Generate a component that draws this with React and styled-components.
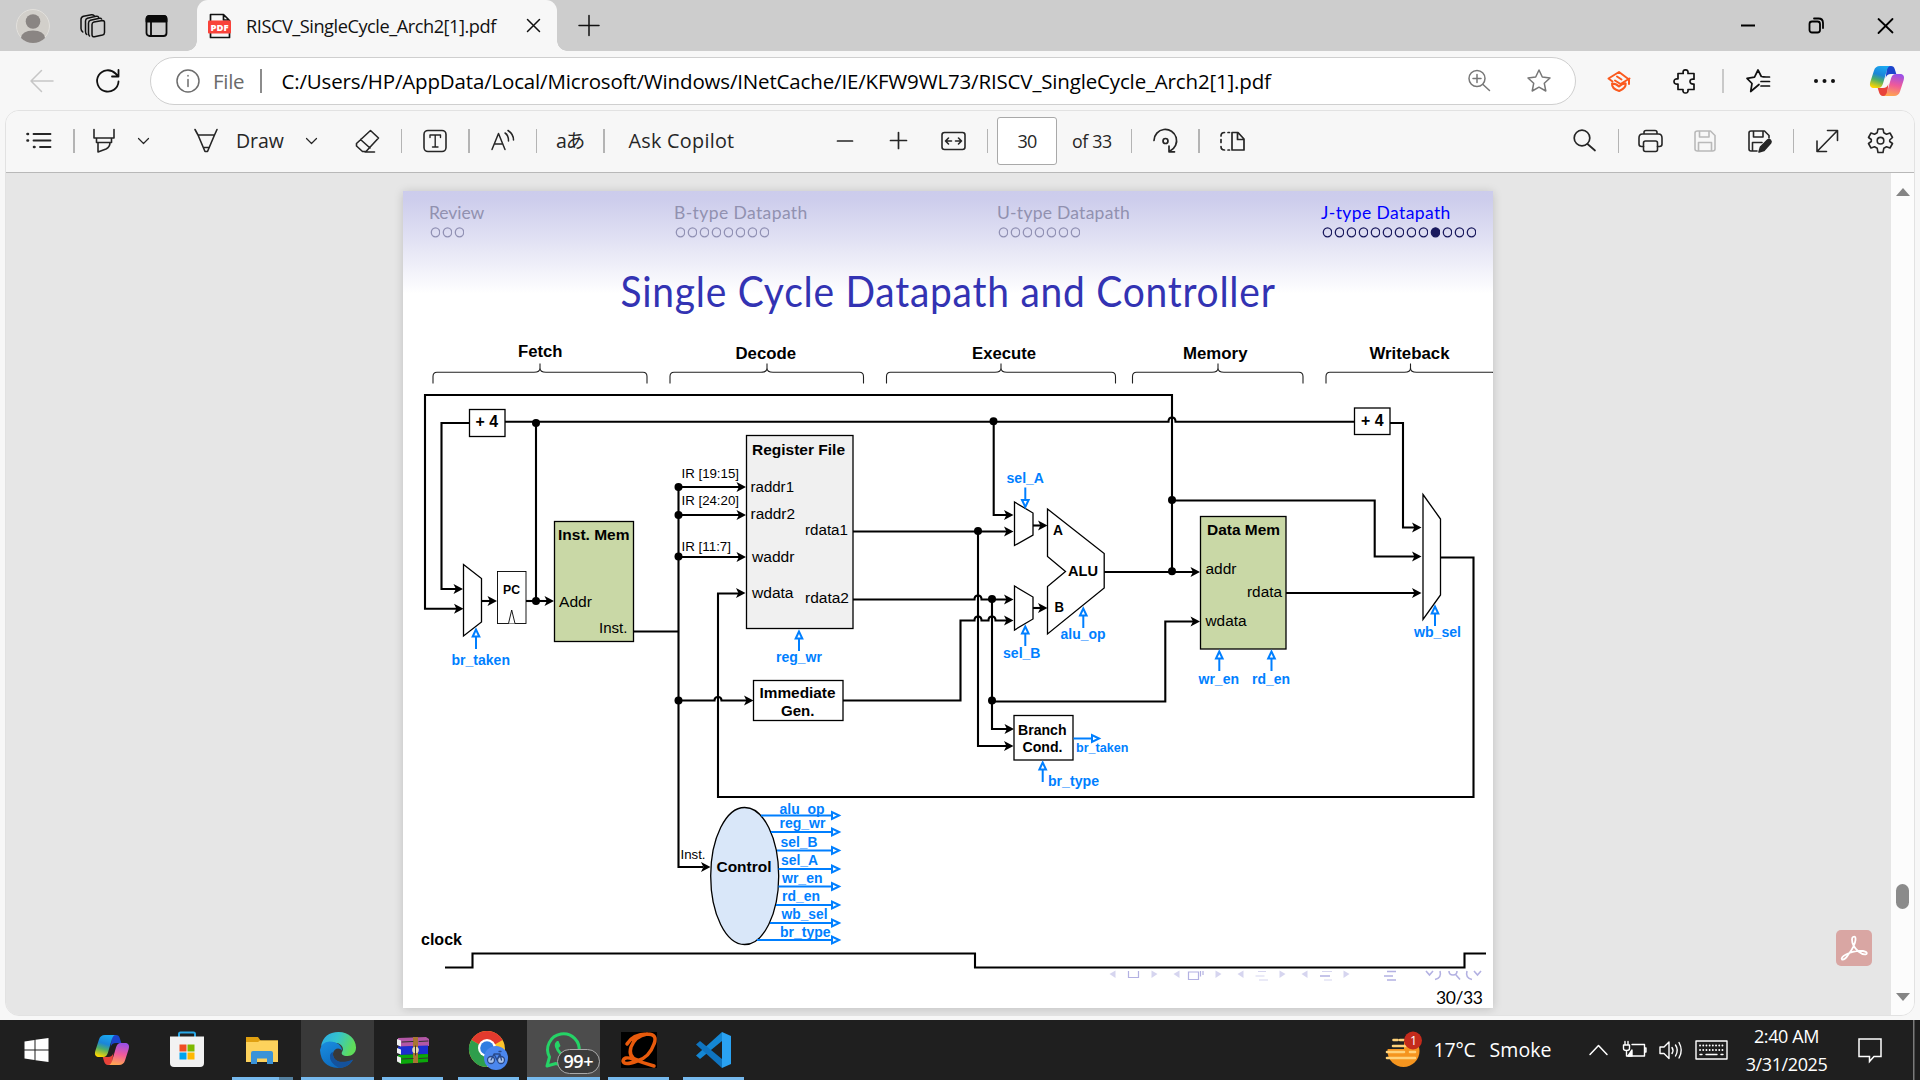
import React from "react";
import styled, { createGlobalStyle, css } from "styled-components";

const UI = '"Open Sans", "Noto Sans", "Noto Sans CJK JP", sans-serif';
const BLUE = "#007fff";

const Global = createGlobalStyle`
  * { box-sizing: border-box; }
  html, body { margin: 0; padding: 0; width: 1920px; height: 1080px; overflow: hidden; background: #f7f7f7; }
`;

const Screen = styled.div`
  width: 1920px;
  height: 1080px;
  display: flex;
  flex-direction: column;
  background: #f7f7f7;
  font-family: ${UI};
  font-stretch: 92%;
  color: #111;
  overflow: hidden;
`;

const Svg = styled.svg`
  display: block;
  flex: none;
  overflow: visible;
  width: ${(p) => p.$w}px;
  height: ${(p) => p.$h}px;
  margin-left: ${(p) => p.$gap || 0}px;
  color: ${(p) => p.$color || "inherit"};
  fill: none;
  stroke: currentColor;
  stroke-width: ${(p) => p.$sw || 1.6};
  stroke-linecap: round;
  stroke-linejoin: round;
`;

function Icon({ w = 24, h = 24, gap, color, sw, children }) {
  return (
    <Svg $w={w} $h={h} $gap={gap} $color={color} $sw={sw} viewBox={`0 0 ${w} ${h}`}>
      {children}
    </Svg>
  );
}

const Spacer = styled.div`
  flex: 1;
`;

const Label = styled.span`
  flex: none;
  width: ${(p) => p.$w}px;
  margin-left: ${(p) => p.$gap || 0}px;
  font-size: ${(p) => p.$size || 20}px;
  letter-spacing: ${(p) => p.$ls || 0}px;
  color: ${(p) => p.$color || "inherit"};
  line-height: 28px;
  white-space: nowrap;
`;

/* ---------- tab strip ---------- */

const TabStrip = styled.div`
  display: flex;
  align-items: center;
  height: 51px;
  flex: none;
  padding: 0 26px 0 16px;
  background: #cdcdcd;
`;

const Tab = styled.div`
  position: relative;
  display: flex;
  align-items: center;
  width: 360px;
  height: 51px;
  margin-left: 28px;
  padding-left: 11px;
  background: #f7f7f7;
  border-radius: 11px 11px 0 0;
  &::before,
  &::after {
    content: "";
    position: absolute;
    bottom: 0;
    width: 10px;
    height: 10px;
  }
  &::before {
    left: -10px;
    background: radial-gradient(circle at 0 0, #cdcdcd 9.5px, #f7f7f7 10px);
  }
  &::after {
    right: -10px;
    background: radial-gradient(circle at 100% 0, #cdcdcd 9.5px, #f7f7f7 10px);
  }
`;

/* ---------- address row ---------- */

const AddressRow = styled.div`
  display: flex;
  align-items: center;
  height: 59px;
  flex: none;
  padding: 1px 0 0 30px;
`;

const Pill = styled.div`
  display: flex;
  align-items: center;
  width: 1426px;
  height: 48px;
  margin-left: 30px;
  padding: 0 23px 0 25px;
  border: 1.5px solid #cfcfcf;
  border-radius: 24px;
  background: #fff;
`;

const Rule = styled.div`
  flex: none;
  width: ${(p) => p.$w || 1.5}px;
  height: 24px;
  margin-left: ${(p) => p.$gap}px;
  background: ${(p) => p.$color || "#b4b4b4"};
`;

/* ---------- viewer ---------- */

const Viewer = styled.div`
  display: flex;
  flex-direction: column;
  width: 1910px;
  height: 906px;
  flex: none;
  margin-left: 5px;
  border: 1px solid #e2e2e2;
  border-radius: 14px;
  overflow: hidden;
`;

const Toolbar = styled.div`
  display: flex;
  align-items: center;
  height: 62px;
  flex: none;
  padding: 0 21px 1px 0;
  border-bottom: 1px solid #b8b8b8;
  background: #f7f7f7;
  color: #262626;
`;

const PageBox = styled.div`
  width: 60px;
  height: 48px;
  margin-left: 9px;
  flex: none;
  border: 1px solid #a9a9a9;
  border-radius: 3px;
  background: #fff;
  display: flex;
  align-items: center;
  justify-content: center;
  font-size: 18px;
  letter-spacing: -0.7px;
`;

const Canvas = styled.div`
  display: flex;
  flex: 1;
  background: #e6e6e6;
  padding: 18px 0 0 397px;
`;

const Sheet = styled.div`
  width: 1090px;
  height: 817px;
  flex: none;
  display: flex;
  flex-direction: column;
  background: linear-gradient(#ccccec 0, #cdcdec 8px, #e3e3f4 52px, #fff 103px) #fefefe;
  box-shadow: 0 1px 9px rgba(0, 0, 0, 0.17);
  font-family: Lato, "Open Sans", sans-serif;
  font-stretch: 100%;
  overflow: hidden;
`;

const SheetNav = styled.div`
  display: flex;
  height: 64px;
  padding: 9.5px 0 0 26px;
`;

const Section = styled.div`
  width: ${(p) => p.$w}px;
  flex: none;
  font-size: 17.5px;
  line-height: 24px;
  letter-spacing: ${(p) => p.$ls ?? 0.4}px;
  color: ${(p) => (p.$on ? "#0000ff" : "#9191b0")};
  white-space: nowrap;
`;

const Dots = styled.div`
  display: flex;
  gap: 2px;
  padding: 2.5px 0 0 1px;
`;

const Dot = styled.svg`
  display: block;
  flex: none;
  width: 10px;
  height: 11px;
  fill: ${(p) => (p.$fill ? "#1a1a5e" : "none")};
  stroke: ${(p) => (p.$on ? "#1a1a5e" : "#9191b4")};
  stroke-width: 1.3;
`;

const Heading = styled.h1`
  height: 80px;
  margin: 0;
  text-align: center;
  font-weight: 400;
  font-size: 42px;
  line-height: 72px;
  letter-spacing: 0.8px;
  white-space: nowrap;
  transform: scaleX(0.928);
  color: #3333b3;
`;

const Diagram = styled.svg`
  display: block;
  width: 1090px;
  height: 673px;
  flex: none;
  font-family: "Liberation Sans", Arial, sans-serif;
  font-size: 15.2px;
  .w { fill: none; stroke: #000; stroke-width: 2.1; }
  .b { stroke: #000; stroke-width: 1.3; }
  .c { fill: none; stroke: ${BLUE}; stroke-width: 2; }
  .brace { fill: none; stroke: #222; stroke-width: 1.1; }
  text { fill: #000; white-space: pre; }
  .sig { fill: ${BLUE}; font-weight: 700; }
  .bold { font-weight: 700; }
`;

const Rail = styled.div`
  display: flex;
  flex-direction: column;
  align-items: center;
  width: 23px;
  height: 842px;
  margin: -18px 0 0 auto;
  padding: 15px 0 14px;
  background: #fcfcfc;
`;

const Thumb = styled.div`
  width: 13px;
  height: 25px;
  margin: 688px 0 auto;
  border-radius: 7px;
  background: #8b8b8b;
`;

const Caret = styled.div`
  border-left: 7.5px solid transparent;
  border-right: 7.5px solid transparent;
  ${(p) =>
    p.$up
      ? css`border-bottom: 8px solid #858585;`
      : css`border-top: 8px solid #858585;`}
`;

const Acrobat = styled.div`
  align-self: flex-end;
  width: 36px;
  height: 36px;
  margin: 0 0 49px 343px;
  border-radius: 5px;
  background: #d9a6a3;
`;

/* ---------- taskbar ---------- */

const Taskbar = styled.div`
  display: flex;
  align-items: center;
  height: 60px;
  flex: none;
  margin-top: 4px;
  padding-right: 6px;
  background: #1f1f1f;
  color: #fff;
`;

const Apps = styled.div`
  display: flex;
  gap: 2.25px;
`;

const Tile = styled.div`
  position: relative;
  display: flex;
  align-items: center;
  justify-content: center;
  width: 73px;
  height: 60px;
  background: ${(p) => p.$bg || "transparent"};
  &::after {
    content: "";
    position: absolute;
    bottom: 0;
    left: ${(p) => (p.$bar === "full" ? 0 : 6)}px;
    right: ${(p) => (p.$bar === "full" ? 0 : 6)}px;
    height: ${(p) => (p.$bar ? 3 : 0)}px;
    background: ${(p) =>
      p.$bar === "stack" ? "linear-gradient(90deg, #76b9ed 47px, #54809f 47px)" : "#76b9ed"};
  }
`;

const Badge = styled.div`
  position: absolute;
  right: 0;
  top: 29px;
  width: 43px;
  height: 25px;
  border: 1px solid #a9a9a9;
  border-radius: 13px;
  background: #3b3b3b;
  font-size: 18px;
  font-weight: 600;
  line-height: 23px;
  letter-spacing: -0.5px;
  text-align: center;
`;

const Clock = styled.div`
  width: 92px;
  margin-left: 13px;
  margin-right: 1px;
  font-size: 18px;
  line-height: 28px;
  letter-spacing: -0.4px;
  text-align: center;
  white-space: nowrap;
`;

/* ---------- icons ---------- */

function Copilot({ w = 34, h = 30, gap, id }) {
  return (
    <Svg $w={w} $h={h} $gap={gap} viewBox="0 0 34 30" preserveAspectRatio="none">
      <defs>
        <linearGradient id={`${id}a`} x1="0.6" y1="0" x2="0.3" y2="1">
          <stop offset="0" stopColor="#1ba8f0" />
          <stop offset=".4" stopColor="#1b85d8" />
          <stop offset=".65" stopColor="#4fae66" />
          <stop offset="1" stopColor="#ffd600" />
        </linearGradient>
        <linearGradient id={`${id}b`} x1="0.6" y1="0" x2="0.4" y2="1">
          <stop offset="0" stopColor="#9a50e8" />
          <stop offset=".5" stopColor="#f05a9a" />
          <stop offset="1" stopColor="#ffa650" />
        </linearGradient>
      </defs>
      <g stroke="none">
        <path d="M17 0h4c2 0 3.2 1.200 3.800 3.200L26.300 8H21c-3 0-4.500 1.500-5.300 4z" fill="#1c44cc" />
        <path d="M17 30h-4c-2 0-3.200-1.200-3.800-3.200L7.700 22H13c3 0 4.500-1.500 5.300-4z" fill="#e8433a" />
        <path d="M10 0h11c-2.400 0-3.400 1.800-4.200 4.500L13 17.500c-.8 2.700-2 4.500-5 4.500H4c-3.600 0-4.700-2.500-3.700-6L4 4.500C4.900 1.600 6.800 0 10 0z" fill={`url(#${id}a)`} />
        <path d="M24 30H13c2.400 0 3.400-1.800 4.200-4.500L21 12.500c.8-2.700 2-4.500 5-4.500h4c3.600 0 4.700 2.500 3.700 6L30 25.500c-.9 2.900-2.800 4.500-6 4.500z" fill={`url(#${id}b)`} />
      </g>
    </Svg>
  );
}

const Chevron = ({ gap }) => (
  <Icon w={12} h={8} gap={gap} sw={1.2}><path d="M.5 1.500l5 5 5-5" /></Icon>
);

/* ---------- diagram parts ---------- */

function Head({ x, y }) {
  return <path d={`M${x} ${y}l-9.500-5 2.400 5-2.400 5z`} fill="#000" />;
}
function Wire({ d, to }) {
  return (
    <>
      <path className="w" d={d} />
      {to && <Head x={to[0]} y={to[1]} />}
    </>
  );
}
function Ctl({ x, y, dir = "up", len = 21 }) {
  const rot = { up: 0, right: 90, down: 180 }[dir];
  return (
    <g transform={`translate(${x} ${y}) rotate(${rot})`}>
      <path className="c" d={`M0 8V${len}`} />
      <path className="c" d="M0 1.500L-3.300 8.500H3.300z" fill="#fff" />
    </g>
  );
}
const T = ({ x, y, w, size, a, c = "", children }) => (
  <text x={x} y={y} className={c} textAnchor={a} fontSize={size} textLength={w} lengthAdjust="spacingAndGlyphs">
    {children}
  </text>
);
const Node = ({ x, y }) => <circle cx={x} cy={y} r="4" />;
const brace = (l, m, r) =>
  `M${l} 383.500V376.500Q${l} 372.300 ${l + 4} 372.300H${m - 6}Q${m} 372.300 ${m} 368V363.500V368Q${m} 372.300 ${m + 6} 372.300H${r - 4}Q${r} 372.300 ${r} 376.500V383.500`;

const outputs = [
  ["alu_op", 779.5, 814, 45, 815.5, 761],
  ["reg_wr", 779.5, 828, 46, 832, 771],
  ["sel_B", 780.5, 847, 37, 850.5, 777],
  ["sel_A", 781, 865, 37, 869, 778.5],
  ["wr_en", 782, 882.5, 40.5, 886.5, 778.5],
  ["rd_en", 782, 901, 38, 905, 776],
  ["wb_sel", 781.5, 919, 46, 923, 770],
  ["br_type", 780, 936.5, 50.5, 940, 757],
];

function Datapath() {
  return (
    <Diagram viewBox="403 335 1090 673">
      {[[433, 540, 647], [670, 767, 863.5], [886.5, 1001, 1115.5], [1132.5, 1218, 1303], [1326, 1410.5, 1496]].map((b) => (
        <path key={b[0]} className="brace" d={brace(...b)} />
      ))}
      <T c="bold" size="16.700" x="518" y="357" w="44.500">Fetch</T>
      <T c="bold" size="16.700" x="735.500" y="359.400" w="60.500">Decode</T>
      <T c="bold" size="16.700" x="972" y="359.400" w="64">Execute</T>
      <T c="bold" size="16.700" x="1183" y="359.400" w="64.500">Memory</T>
      <T c="bold" size="16.700" x="1369.500" y="359.400" w="80">Writeback</T>

      <Wire d="M1172 572V395H425V608.700H457" to={[463.5, 608.7]} />
      <Wire d="M469 423H441.500V589H457" to={[463, 589]} />
      <Wire d="M505 421.700H1168.500Q1168.500 417.500 1172 417.500T1175.500 421.700H1355" />
      <Wire d="M536 423V601" />
      <Wire d="M482 601H490" to={[497, 601]} />
      <Wire d="M526 601H547" to={[554, 601]} />
      <Wire d="M634 631.500H678.500" />
      <Wire d="M678.500 487V867H703" to={[710.5, 867]} />
      <Wire d="M678.500 487H740" to={[746, 487]} />
      <Wire d="M678.500 515H740" to={[746, 515]} />
      <Wire d="M678.500 557H740" to={[746, 557]} />
      <Wire d="M678.500 700.500H714.500Q714.500 697 718 697T721.500 700.500H747" to={[753.5, 700.5]} />
      <Wire d="M1441 557.500H1473.500V797H718V593.500H740" to={[745.5, 593]} />
      <Wire d="M853 531.500H1007" to={[1013.5, 531.5]} />
      <Wire d="M853 599.500H974.500Q974.500 595.500 978 595.500T981.500 599.500H1007" to={[1013.5, 599.5]} />
      <Wire d="M843 700.500H960.500V620.500H974.500Q974.500 616.500 978 616.500T981.500 620.500H988.500Q988.500 616.500 992 616.500T995.500 620.500H1007" to={[1013.5, 620.5]} />
      <Wire d="M978 531V746H1007" to={[1013.5, 746]} />
      <Wire d="M992 599V729H1007" to={[1014, 729]} />
      <Wire d="M992 701.500H1165.300V621.500H1194" to={[1200, 621.5]} />
      <Wire d="M993.700 421V515H1007" to={[1013.5, 515]} />
      <Wire d="M1033 525.500H1041" to={[1047.5, 525.5]} />
      <Wire d="M1033 608H1041" to={[1047.5, 608]} />
      <Wire d="M1104 572H1194" to={[1200, 572]} />
      <Wire d="M1172 500.500H1374.700V556.500H1415" to={[1421.5, 556.5]} />
      <Wire d="M1286 593H1415" to={[1421.5, 593]} />
      <Wire d="M1390 423H1403V527.500H1415" to={[1421.5, 527.5]} />
      <Wire d="M445 967.500H472.500V953.500H975V967.500H1464.500V953.500H1486" />
      {[[536, 423], [536, 601], [678.5, 487], [678.5, 515], [678.5, 556.5], [678.5, 700.5], [978, 531], [992, 599], [992, 700.5], [993.5, 421.3], [1172, 571.3], [1172, 500]].map(([x, y]) => (
        <Node key={`${x}-${y}`} x={x} y={y} />
      ))}

      <g className="b" fill="#fff">
        <rect x="469.500" y="409.500" width="35.500" height="27" />
        <rect x="1354.500" y="408" width="35.500" height="26.500" />
        <path d="M463.500 564.500L481.500 578.500V622L463.500 636z" />
        <rect x="497.500" y="571.500" width="28.500" height="52" strokeWidth=".9" />
        <path d="M508.500 623.500L511.700 610L515 623.500" strokeWidth=".9" />
        <rect x="554.500" y="521.500" width="79" height="120" fill="#c9d8a6" />
        <rect x="746.500" y="435.500" width="106.500" height="193" fill="#f0f0f0" />
        <rect x="753.500" y="680.500" width="89.500" height="40" />
        <path d="M1014.500 502L1033 513V535L1014.500 545.500z" />
        <path d="M1014.500 586L1033 597V619L1014.500 630z" />
        <path d="M1047.500 509L1104.200 553.500V588L1047.500 634V586.500L1065.500 571.500L1047.500 556.500z" />
        <rect x="1200.500" y="516.500" width="85.500" height="132.500" fill="#c9d8a6" />
        <path d="M1423 494.500L1440.500 519V595L1423 619.500z" />
        <rect x="1014" y="715.500" width="59" height="44.500" />
        <ellipse cx="744.700" cy="876" rx="34" ry="68.500" fill="#d9e7f9" />
      </g>

      <T c="bold" x="475.500" y="426.700" w="22.500" size="16">+ 4</T>
      <T c="bold" x="1361" y="425.500" w="22.500" size="16">+ 4</T>
      <T c="bold" x="503" y="594" w="17" size="12.500">PC</T>
      <T c="bold" x="558" y="540" w="71.500">Inst. Mem</T>
      <T x="559" y="606.500" w="33">Addr</T>
      <T x="599" y="633" w="28.500">Inst.</T>
      <T x="681.500" y="478" w="57.500" size="13.500">IR [19:15]</T>
      <T x="681.500" y="505" w="57.500" size="13.500">IR [24:20]</T>
      <T x="681.500" y="551" w="49.500" size="13.500">IR [11:7]</T>
      <T c="bold" x="752" y="455" w="93">Register File</T>
      <T x="750.500" y="492" w="43.500">raddr1</T>
      <T x="750.500" y="519" w="44.500">raddr2</T>
      <T x="752" y="562" w="42.500">waddr</T>
      <T x="752" y="597.500" w="41.500">wdata</T>
      <T x="805" y="535" w="43">rdata1</T>
      <T x="805" y="603" w="44">rdata2</T>
      <T c="bold" x="759.500" y="697.500" w="76">Immediate</T>
      <T c="bold" x="781" y="715.600" w="33.500">Gen.</T>
      <T c="bold" x="1053" y="535" w="10" size="14">A</T>
      <T c="bold" x="1054.500" y="612" w="9.500" size="14">B</T>
      <T c="bold" x="1068" y="576" w="30">ALU</T>
      <T c="bold" x="1207" y="535.300" w="73">Data Mem</T>
      <T x="1205.500" y="574" w="31">addr</T>
      <T x="1247" y="597" w="35">rdata</T>
      <T x="1205.500" y="626" w="41">wdata</T>
      <T c="bold" x="1018" y="735" w="48.500" size="14">Branch</T>
      <T c="bold" x="1022.500" y="752" w="40" size="14">Cond.</T>
      <T c="bold" x="716.500" y="872" w="55">Control</T>
      <T x="680.500" y="859" w="25" size="13.500">Inst.</T>
      <T c="bold" x="421" y="945" w="41" size="16">clock</T>

      <Ctl x={476} y={628} /><T c="sig" x="451.500" y="665.300" w="58.500" size="14">br_taken</T>
      <Ctl x={799} y={630} /><T c="sig" x="776" y="662.300" w="46" size="14">reg_wr</T>
      <Ctl x={1025.3} y={508.5} dir="down" /><T c="sig" x="1006.500" y="483" w="37.500" size="14">sel_A</T>
      <Ctl x={1025.3} y={625} /><T c="sig" x="1003" y="658.300" w="37.500" size="14">sel_B</T>
      <Ctl x={1083.3} y={607} /><T c="sig" x="1060.500" y="639.300" w="45" size="14">alu_op</T>
      <Ctl x={1219.3} y={650} /><T c="sig" x="1198.500" y="684.300" w="40.500" size="14">wr_en</T>
      <Ctl x={1271.5} y={650} /><T c="sig" x="1252" y="684.300" w="38" size="14">rd_en</T>
      <Ctl x={1435} y={605} /><T c="sig" x="1414" y="637.300" w="47" size="14">wb_sel</T>
      <Ctl x={1042.7} y={761} /><T c="sig" x="1048" y="786.300" w="51" size="14">br_type</T>
      <Ctl x={1100.5} y={738.5} dir="right" len={27} /><T c="sig" x="1076" y="752.300" w="52.500" size="12.600">br_taken</T>
      {outputs.map(([n, x, y, w, ly, lx]) => (
        <g key={n}>
          <Ctl x={840.5} y={ly} dir="right" len={840.5 - lx} />
          <T c="sig" x={x} y={y} w={w} size="14">{n}</T>
        </g>
      ))}

      <g fill="#d6d5ef">
        {[1109.5, 1173.5, 1237.5, 1301.5].map((x) => <path key={x} d={`M${x} 974l6-3.500v7.500z`} />)}
        {[1157.5, 1221.5, 1285.5, 1349.5].map((x) => <path key={x} d={`M${x} 974l-6-3.500v7.500z`} />)}
      </g>
      <g fill="none" stroke="#b3b1e2" strokeWidth="1.200">
        <path d="M1128.500 971V977.500H1138.500V971M1188.500 972h10v7.500h-10zM1200.500 971v5.500M1203 971v4" />
        <path d="M1258 971.500h8M1255.500 976h9M1259 980h9" stroke="#d6d5ef" />
        <path d="M1322 971.500h10M1324 980h8" stroke="#d6d5ef" />
        <path d="M1320 976h10M1387 971.500h9M1384 976h9M1387 980h9" strokeWidth="1.500" />
        <path d="M1426 971l3.500 4 3.500-4M1440 971q2 7-5 8.500M1449 971q0 4 4 4t4-4M1456 975l4 4.500M1467 971q-2 7 5 8.500M1474 971l3.500 4 3.500-4" strokeWidth="1.600" />
      </g>
      <text x="1436" y="1004" fontSize="17.500" textLength="47" fontFamily="Lato, sans-serif">30/33</text>
    </Diagram>
  );
}

const sections = [
  { name: "Review", n: 3, w: 245, ls: -0.05 },
  { name: "B-type Datapath", n: 8, w: 323 },
  { name: "U-type Datapath", n: 7, w: 324, ls: 0.25 },
  { name: "J-type Datapath", n: 13, w: 170, active: 9 },
];

export default function App() {
  return (
    <>
      <Global />
      <Screen>
        <TabStrip>
          <Icon w={34} h={34}>
            <g stroke="none">
              <circle cx="17" cy="17" r="16.500" fill="#d2cfca" stroke="#e2e0dc" strokeWidth="1" />
              <circle cx="17" cy="12.500" r="7.300" fill="#8a8583" />
              <path d="M5 29Q6 21.500 17 21.500T29 29Q24 34 17 34T5 29z" fill="#8a8583" />
            </g>
          </Icon>
          <Icon w={26} gap={30} sw={1.5} color="#111">
            <path d="M14 8L22.500 6.500Q24.500 6.500 24.500 8.500V18.500Q24.500 20.500 22.500 21L14.500 22.800Q12 23 12 20.500V10.500Q12 8.500 14 8z" />
            <path d="M6.800 20.500Q5.500 19.500 5.500 17.500V7Q5.500 4.800 7.500 4.200L16 2.200Q18 2 18.500 3M2.800 18Q1 16.500 1 14.500V5.500Q1 2.800 3.500 2.200L11.500.7Q13 .5 14 1.500M9.500 22Q8.500 21 8.500 19V9Q8.500 6.800 10.500 6.300L19.500 4.300Q21 4 21.500 5" />
          </Icon>
          <Icon w={24} gap={39} sw={1.8} color="#0a0a0a">
            <rect x="1.500" y="2" width="20" height="20" rx="3" />
            <path d="M1.500 7.500V5q0-3 3-3h14q3 0 3 3v2.500z" fill="currentColor" />
            <path d="M6 8v14" />
          </Icon>
          <Tab>
            <Icon w={24} h={26}>
              <path d="M2.500 8V1.500H15.500L21.500 7.500V8M15.500 1.500V7H21M2.500 19v5.500H21.500V19" stroke="#111" strokeWidth="1.700" />
              <rect x="0" y="7.500" width="23" height="13" rx="1" fill="#f9423a" stroke="none" />
              <text x="2.500" y="17.700" fontSize="9.500" fontWeight="800" fill="#fff" stroke="none" textLength="18">PDF</text>
            </Icon>
            <Label $w={280} $gap={14} $size={18.2} $ls={-0.46}>RISCV_SingleCycle_Arch2[1].pdf</Label>
            <Icon w={15} h={15} sw={1.5}><path d="M1.500 1.500l12 12M13.500 1.500l-12 12" /></Icon>
          </Tab>
          <Icon w={22} h={22} gap={21} sw={1.5} color="#111"><path d="M11 .5v20M1 10.500h20" /></Icon>
          <Spacer />
          <Icon w={16} h={16} sw={2} color="#000"><path d="M1 7.500h14" strokeLinecap="butt" /></Icon>
          <Icon w={17} h={17} gap={52} sw={1.8} color="#000">
            <rect x="1.500" y="4.500" width="10.500" height="11" rx="2.500" />
            <path d="M6 1.500h4.500q4.500 0 4.500 4.500v5" />
          </Icon>
          <Icon w={16} h={16} gap={53} sw={1.8} color="#000"><path d="M.5 1l14 13.500M14.500 1L.5 15" /></Icon>
        </TabStrip>

        <AddressRow>
          <Icon color="#c6c6c6" sw={1.5}><path d="M23 12H1M11.500 1.500L1 12l10.500 10.500" /></Icon>
          <Icon gap={42} sw={1.8} color="#111">
            <path d="M22.500 12.500a10.700 10.700 0 1 1-3-8L22 7M22.500 1v6.500h-6.500" />
          </Icon>
          <Pill>
            <Icon color="#6d6d6d" sw={1.5}><circle cx="12" cy="12" r="11" /><path d="M12 10.500v7M12 6.500v.5" /></Icon>
            <Label $w={47} $gap={13} $size={20.5} $ls={-0.3} $color="#6a6a6a">File</Label>
            <Rule $gap={0} $color="#8c8c8c" />
            <Label $w={1185} $gap={20} $size={20.5} $ls={-0.16} $color="#000">
              C:/Users/HP/AppData/Local/Microsoft/Windows/INetCache/IE/KFW9WL73/RISCV_SingleCycle_Arch2[1].pdf
            </Label>
            <Icon color="#777" sw={1.5}><circle cx="10" cy="9.500" r="8" /><path d="M16 15.500l6.500 6M10 5.500v8M6 9.500h8" /></Icon>
            <Icon gap={36} color="#777" sw={1.5}>
              <path d="M12 1l3.300 7 7.700 1-5.700 5.300 1.500 7.700-6.800-3.800L5.200 22l1.500-7.700L1 9l7.700-1z" />
            </Icon>
          </Pill>
          <Icon gap={31} color="#fb5a1e" sw={2}>
            <path d="M22 15V10.500L12 3 1.500 9.500 5.500 12.500M22.500 9.500L13.500 15 8 11.500M5 14.500q-.5 5 7.200 7.500 7-3 6.500-7.500M5 14.500q4 0 7 3 3-3 6.500-3M10 7.500l4.500 3" />
          </Icon>
          <Icon gap={42} color="#111" sw={1.7}>
            <path d="M8 4.500h2.200Q9.500.8 12.500.8T15 4.500H21v5.700Q17 9.700 17 12.500T21 15v5.500H15Q15.500 24 12.500 24T10 20.500H5V15Q1 15.500 1 12.500T5 10V4.500z" />
          </Icon>
          <Rule $gap={25} $color="#c9c9c9" />
          <Icon gap={22.5} color="#111" sw={1.7}>
            <path d="M13 15.500l-8.300 7 1.300-8L1 9.300l7.500-1.200L12 1l3.300 6.500L20 8M15 12.500h8.500M15 17h8.500M17 8h6.500" />
          </Icon>
          <Icon gap={43} color="#111"><g fill="currentColor" stroke="none"><circle cx="3" cy="12" r="2" /><circle cx="11.500" cy="12" r="2" /><circle cx="20" cy="12" r="2" /></g></Icon>
          <Copilot gap={33} id="cpA" />
        </AddressRow>

        <Viewer>
          <Toolbar>
            <Icon w={25} gap={20} sw={1.8}>
              <path d="M7.500 5h17M7.500 11.500h17M14 18h10.500" />
              <path d="M1.500 5h.5M1.500 11.500h.5M8 18h.5" strokeWidth="2.600" />
            </Icon>
            <Rule $gap={22} />
            <Icon gap={17.5}><path d="M2 .5v8.500h20V.5M4.500 9v4.500h15V9M6 13.500v9.500l8-3q4-2 4-6.500" /></Icon>
            <Chevron gap={22} />
            <Icon gap={44}><path d="M1 .5L4 6h16.500L23 .5M4 6l7 16.500h2.500L20.500 6M9.500 18.500h5.500" /></Icon>
            <Label $w={48} $gap={18} $size={19.5} $ls={-0.1}>Draw</Label>
            <Chevron gap={22} />
            <Icon w={25} gap={37}><path d="M15.500 1.500l8 7.500-12.500 13.500h-3.500L1.500 17v-2.500zM5.500 10.500l9.500 8.500M10 23h9.500" /></Icon>
            <Rule $gap={20.5} />
            <Icon gap={21}><rect x="1" y="1.500" width="22" height="21" rx="4" /><path d="M7 8.500V6h10.500v2.500M12.200 6v12M9.500 18h5.500" strokeWidth="1.400" /></Icon>
            <Rule $gap={21} />
            <Icon gap={21.5} sw={1.5}><path d="M1 20.500L7.500 4.500 14 20.500M3.500 15h8M14 4q3.500 2 3.500 8M17 1.500Q22.500 5 22.500 11" /></Icon>
            <Rule $gap={20.5} />
            <Label $w={28} $gap={19} $size={19.5} $ls={-1}>aあ</Label>
            <Rule $gap={19} />
            <Label $w={108} $gap={24} $size={19.8} $ls={0.28}>Ask Copilot</Label>
            <Icon w={16} gap={100.5} sw={1.7}><path d="M.5 12h15" /></Icon>
            <Icon w={18} gap={36} sw={1.7}><path d="M1.500 11.500h16M9.500 3.500v16" /></Icon>
            <Icon w={25} gap={34}><rect x="1" y="3.500" width="23" height="17" rx="2.500" /><path d="M4.500 12h6M14.500 12h6M7.500 9l-3 3 3 3M17.500 9l3 3-3 3" /></Icon>
            <Rule $gap={20.5} />
            <PageBox>30</PageBox>
            <Label $w={42} $gap={15} $size={17.8} $ls={-0.35}>of 33</Label>
            <Rule $gap={16.5} />
            <Icon w={25} gap={21} sw={1.7}><path d="M1 11.500A11.300 11.300 0 1 1 17 22M16 17v5.800h5.500" /><circle cx="12.500" cy="12" r="2.500" /></Icon>
            <Rule $gap={20} />
            <Icon w={25} gap={20.5} sw={1.7}><path d="M12 3.500h6l6 6.500v11H12zM17.500 4v6.500h6M8 3.500h1.500M8 21h1.500M4.500 3.500Q1 3.500 1 7M1 10.500v3M4.500 21Q1 21 1 17.500" /></Icon>
            <Spacer />
            <Icon sw={1.7}><circle cx="9" cy="9" r="7.800" /><path d="M14.500 15l7.500 6.500" /></Icon>
            <Rule $gap={21} $w={1} />
            <Icon w={25} gap={19.5}><path d="M5.500 17.500H3.500Q1 17.500 1 15V9Q1 5 4.500 5h16Q24 5 24 9v6q0 2.500-2.500 2.500h-2M6 5V3.500Q6 1.500 8 1.500h9q2 0 2 2V5" /><rect x="5.500" y="12" width="14" height="10.500" rx="2" /></Icon>
            <Icon gap={30} color="#b9b9b9"><path d="M4.500 2h13l4.500 4.500V20q0 2-2.500 2h-15Q2 22 2 20V4Q2 2 4.500 2zM6.500 2v6h9.500V2M5.500 22v-8.500h13V22" /></Icon>
            <Icon gap={30}>
              <path d="M10 22H4Q2 22 2 20V4Q2 2 4 2h13.500L22 6.500V9M6.500 2v6H16V2M5.500 22v-8.500H15" />
              <path d="M12 23l1.500-5 7-7q1.800-1 3 .3t0 3L17 21.500z" fill="currentColor" />
            </Icon>
            <Rule $gap={21.5} />
            <Icon w={23} gap={22}><path d="M1 12v10.500H10.500M11.500 1.500h10V11.500M21.500 1.500L1 22.500" /></Icon>
            <Icon w={25} h={26} gap={29}>
              <path d="M10 1h5l.8 3.700 2.700 1.500L22 5 24.500 9.500l-2.800 2.500v1.500L24.500 15.500 22 20l-3.500-1.200-2.700 1.500L15 24.500H10l-.8-4.200-2.700-1.500L3 20 .5 15.500l2.800-2v-2L.5 9.500 3 5l3.500 1.200 2.700-1.500z" />
              <circle cx="12.500" cy="12.700" r="3.300" />
            </Icon>
          </Toolbar>
          <Canvas>
            <Sheet>
              <SheetNav>
                {sections.map((s) => (
                  <Section key={s.name} $w={s.w} $ls={s.ls} $on={s.active !== undefined}>
                    {s.name}
                    <Dots>
                      {Array.from({ length: s.n }, (_, i) => (
                        <Dot key={i} viewBox="0 0 10 11" $on={s.active !== undefined} $fill={s.active === i}>
                          <ellipse cx="5.500" cy="5.300" rx="4.200" ry="4.500" />
                        </Dot>
                      ))}
                    </Dots>
                  </Section>
                ))}
              </SheetNav>
              <Heading>Single Cycle Datapath and Controller</Heading>
              <Datapath />
            </Sheet>
            <Acrobat>
              <Icon w={36} h={36} color="#fff" sw={1.8}>
                <path d="M17 7q3-1.500 2.500 3Q19 16 12 25q-3 5-6 4.500-1.500-2 4-5Q18 20 27 21q5 1 3.500 3-3 1.500-8-2.500Q16 16 16 9.500 16 7.500 17 7z" />
              </Icon>
            </Acrobat>
            <Rail>
              <Caret $up />
              <Thumb />
              <Caret />
            </Rail>
          </Canvas>
        </Viewer>

        <Taskbar>
          <Apps>
            <Tile>
              <Icon w={24} h={24}><path stroke="none" fill="#fff" d="M-.5 3.500L9.500 2v9.500H-.5zM10.500 1.800L23.500 0v11.500H10.500zM-.5 12.500h10V22L-.5 20.500zM10.500 12.500h13V24l-13-1.800z" /></Icon>
            </Tile>
            <Tile><Copilot id="cpB" /></Tile>
            <Tile>
              <Icon w={36} h={36}>
                <path d="M10 7V2q0-1.500 1.500-1.500h13Q26 .5 26 2v5" stroke="#2aa9e8" strokeWidth="2" />
                <g stroke="none">
                  <path d="M1 4.500h34V31q0 4-4 4H5q-4 0-4-4z" fill="#f2f2f2" />
                  <path d="M10.500 12.500h7v7h-7z" fill="#f04e23" /><path d="M18.500 12.500h7v7h-7z" fill="#7eb900" />
                  <path d="M10.500 20.500h7v7h-7z" fill="#00a3ee" /><path d="M18.500 20.500h7v7h-7z" fill="#ffb800" />
                </g>
              </Icon>
            </Tile>
            <Tile $bar="stack">
              <Icon w={32} h={27}>
                <g stroke="none">
                  <path d="M0 0h12l2.500 3.500H32V25H0z" fill="#e0a010" />
                  <path d="M0 5h12l2-1.500h18V25H0z" fill="#fdd25c" />
                  <path d="M5 27V16q0-2 2-2h18q2 0 2 2v11h-6v-5.500H11V27z" fill="#3a93d8" />
                </g>
              </Icon>
            </Tile>
            <Tile $bg="#393939" $bar="full">
              <Icon w={36} h={36}>
                <defs>
                  <linearGradient id="e1" x1="0" y1="0" x2="1" y2=".3"><stop offset="0" stopColor="#2aa8e8" /><stop offset=".5" stopColor="#35c4cc" /><stop offset="1" stopColor="#5fdc5a" /></linearGradient>
                  <linearGradient id="e2" x1="0" y1="0" x2=".6" y2="1"><stop offset="0" stopColor="#1a8ee0" /><stop offset="1" stopColor="#0c68bc" /></linearGradient>
                </defs>
                <g stroke="none">
                  <path d="M1 14Q4 0 18.500 0C29 0 36 7.500 36 15.500 36 21 32 24 27.500 24c-5 0-6.500-2-5.500-4 2.500-3 0-8-5-9Q7 9.500 1 14z" fill="url(#e1)" />
                  <path d="M0 18Q1 10 9.500 9.500c8 0 12.500 4.500 12.500 9-2-3-8-3-9 3-.5 7 7 12 20 6.500Q28 36 18 36 1 35 0 18z" fill="url(#e2)" />
                  <path d="M13 20c-1 8 6 13 20 7.500Q28.500 35.500 19 36 9 31 10 23q1-3 3-3z" fill="#14529c" />
                </g>
              </Icon>
            </Tile>
            <Tile $bar="on">
              <Icon w={32} h={27} sw={1}>
                <g stroke="none">
                  <path d="M1 1l28-1 3 2v7l-28 1-3-2z" fill="#b357a6" /><path d="M1 9.500l30-1v8.500l-27 1-3-2z" fill="#1c2ed0" /><path d="M1 18l30-1v8l-27 2-3-2z" fill="#0ba80b" />
                  <path d="M0 2l4 1.500v6L0 8zM0 11l4 1.500v5L0 16zM0 19l4 1.500v6L0 24.500z" fill="#eee" />
                  <path d="M16 0h5v26h-5z" fill="#a97532" /><circle cx="18.500" cy="13" r="3.300" fill="#e5d9b0" />
                </g>
                <path d="M18.500 9v9M5 5l11-.5M22 4.500l9-.5M5 22l11-.5M22 21.500l9-.5" stroke="#333" />
              </Icon>
            </Tile>
            <Tile $bar="on">
              <Icon w={39} h={39}>
                <g stroke="none">
                  <circle cx="18" cy="18" r="18" fill="#fdc52c" />
                  <path d="M18 18L2.400 9A18 18 0 0 1 33.600 9z" fill="#e23a2e" />
                  <path d="M18 18L2.400 9a18 18 0 0 0 15.600 27z" fill="#2e9e4c" />
                  <circle cx="18" cy="17" r="9" fill="#fff" /><circle cx="18" cy="17" r="6.800" fill="#2f7de1" />
                  <circle cx="27" cy="27" r="12" fill="#4b87ee" />
                </g>
                <g stroke="#2a4a8a" strokeWidth="1.300"><circle cx="22" cy="29" r="3.500" fill="#a9c2e8" /><circle cx="32" cy="29" r="3.500" fill="#a9c2e8" /><path d="M22 29l3-6h6l1.500 6M25 23l3 6 3-6M30 20.500h2" /></g>
              </Icon>
            </Tile>
            <Tile $bg="#4c4c4c" $bar="full">
              <Icon w={36} h={36}>
                <path d="M2 34l2.500-9A15.800 15.800 0 1 1 11 31.500z" stroke="#25d366" strokeWidth="3" />
                <path d="M12 9q-3 2-2 6 3 9 12 12 4 0 5-4l-5-3-2.500 2q-4-1.500-6-6l2-2L13.500 9z" fill="#25d366" stroke="none" />
              </Icon>
              <Badge>99+</Badge>
            </Tile>
            <Tile $bar="on">
              <Icon w={36} h={36}>
                <path stroke="none" fill="#000" d="M0 0h36v36H0z" />
                <path d="M6 12Q12 2 26 2 37 2 33 12 28 26 16 29 3 34 2 29 3 24 12 27 22 31 33 34M26 2Q14 4 10 15 7 25 16 28" stroke="#e85a0c" strokeWidth="3.500" />
              </Icon>
            </Tile>
            <Tile $bar="on">
              <Icon w={36} h={36}>
                <g stroke="none">
                  <path d="M26 0l9 4v28l-9 4z" fill="#2aa2f2" />
                  <path d="M26 0v9L4 27 0 23.500z" fill="#1487d4" />
                  <path d="M26 36v-9L4 9 0 12.500z" fill="#0f74c0" />
                </g>
              </Icon>
            </Tile>
          </Apps>
          <Spacer />
          <Icon w={36} h={36}>
            <g stroke="none">
              <circle cx="17.500" cy="19" r="16" fill="#f5951f" />
              <path d="M0 0h36v10H18v7H0z" fill="#1f1f1f" />
            </g>
            <path d="M7.500 8h4M14 8h4M7 14h13M1 20h17M24 20h5M1 26h28" stroke="#ffd27a" strokeWidth="2.600" />
            <circle cx="27" cy="8.500" r="9" fill="#c42b1c" stroke="none" />
            <text x="24" y="13" fontSize="12.500" fill="#fff" stroke="none">1</text>
          </Icon>
          <Label $w={56} $gap={12} $size={19.5} $ls={-0.2}>17°C</Label>
          <Label $w={64} $size={19.5} $ls={0.1}>Smoke</Label>
          <Icon w={20} h={12} gap={35} sw={1.5}><path d="M1 10.500L9.500 1.500l8.500 9" /></Icon>
          <Icon gap={13} sw={1.4}><path d="M10 6.500h12.500v11.500H8M22.500 10h1.500v4h-1.500M1.500 7h6v3.500q0 2-3 2t-3-2zM3 3.500V7M6 3.500V7M4.500 12.500v5.500H8" /><path d="M6 18l4-6v6z" fill="#fff" /></Icon>
          <Icon w={23} gap={13} sw={1.4}><path d="M1 9h4l5-5v16.500l-5-5H1zM13 9.500q2 3 0 6M16.500 7q3.500 5 0 11M20 4.500q4.500 8 0 15.500" /></Icon>
          <Icon w={33} h={20} gap={13} sw={1.4}><rect x="1" y="1" width="31" height="18" /><path d="M5 5.500h23M5 10h23" strokeDasharray=".1 3.100" strokeWidth="1.800" /><path d="M5 14.500h2M11 14.500h11M26 14.500h2" /></Icon>
          <Clock>2:40 AM<br />3/31/2025</Clock>
          <Icon w={24} h={26} gap={24} sw={1.5}><path d="M1 2h22v17.500h-7L11.500 24.500V19.500H1z" strokeLinejoin="miter" /></Icon>
          <Svg $w={1.5} $h={60} $gap={31} viewBox="0 0 1.5 60" preserveAspectRatio="none"><path d="M0 0h1.500v60H0z" fill="#7b7b7b" stroke="none" /></Svg>
        </Taskbar>
      </Screen>
    </>
  );
}
